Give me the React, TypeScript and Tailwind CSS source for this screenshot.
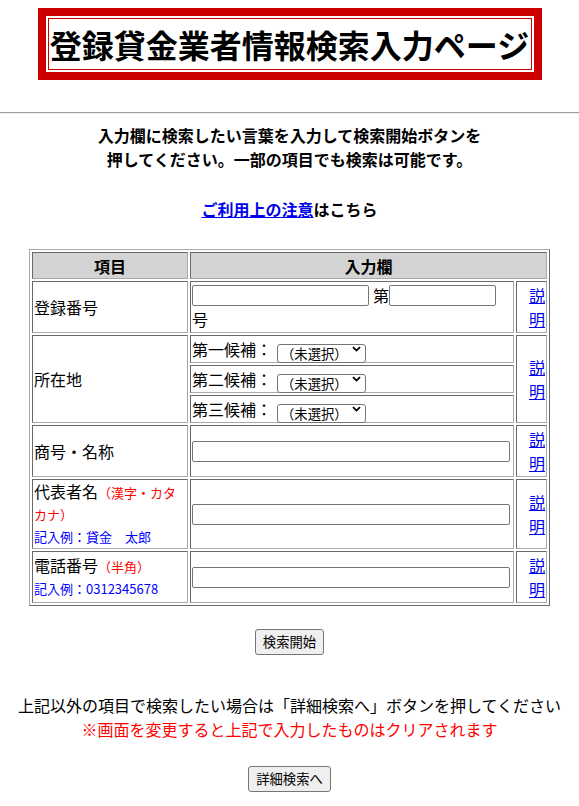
import React from "react";

// inset / outset borders like an old HTML table with border="1"
const tableBorder =
  "border border-t-[#a9a9a9] border-l-[#a9a9a9] border-r-[#696969] border-b-[#696969]";
const cell =
  "border border-t-[#696969] border-l-[#696969] border-r-[#a9a9a9] border-b-[#a9a9a9] p-px align-middle";

const TextInput = ({ width }: { width: string }) => (
  <input
    type="text"
    className={`${width} h-[21px] rounded-[2px] border border-[#767676] bg-white px-[2px] text-[13.33px] outline-none`}
  />
);

const PrefSelect = () => (
  <div className="relative inline-block h-[19px] w-[89px]">
    <select className="h-full w-full appearance-none rounded-[3px] border border-[#767676] bg-white pl-[3px] text-[13.33px] leading-[15px] text-black outline-none">
      <option>（未選択）</option>
    </select>
    <svg
      className="pointer-events-none absolute right-[5px] top-[6px]"
      width="9"
      height="6"
      viewBox="0 0 9 6"
      fill="none"
    >
      <path d="M1 1.2 L4.5 4.6 L8 1.2" stroke="#000" strokeWidth="1.8" />
    </svg>
  </div>
);

const Help = ({ rows = 1 }: { rows?: number }) => (
  <td rowSpan={rows} className={`${cell} text-right leading-[24px]`}>
    <a href="#" className="text-[#0000ee] underline">
      説明
    </a>
  </td>
);

const Candidate = ({ label }: { label: string }) => (
  <div className="flex items-center">
    <span className="leading-[24px]">{label}</span>
    <span className="ml-[5px] flex items-center">
      <PrefSelect />
    </span>
  </div>
);

const OldButton = ({ children }: { children: React.ReactNode }) => (
  <button className="h-[26px] rounded-[3px] border border-[#767676] bg-[#efefef] px-[7px] text-[13.33px] leading-[20px] text-black">
    {children}
  </button>
);

export default function App() {
  return (
    <div className="min-h-screen bg-white pb-4 font-['Noto_Sans_CJK_JP','Noto_Sans',sans-serif] text-[16px] text-black">
      {/* title */}
      <div className="mx-auto mt-[8px] w-[504px] border-[8px] border-[#cc0000] bg-white p-[2px]">
        <div className="flex h-[52px] items-center justify-center border border-[#cc0000]">
          <h1 className="whitespace-nowrap text-[32px] font-bold leading-none">
            登録貸金業者情報検索入力ページ
          </h1>
        </div>
      </div>

      <div className="mt-[32px] h-[2px] border-t border-b border-t-[#a0a0a0] border-b-[#eeeeee]" />

      <p className="mt-[9px] text-center font-bold leading-[24px]">
        入力欄に検索したい言葉を入力して検索開始ボタンを
        <br />
        押してください。一部の項目でも検索は可能です。
      </p>

      <p className="mt-[26px] text-center font-bold leading-[24px]">
        <a href="#" className="text-[#0000ee] underline">
          ご利用上の注意
        </a>
        はこちら
      </p>

      <table
        className={`mx-auto mt-[28px] w-[521px] table-fixed border-separate border-spacing-[2px] ${tableBorder}`}
      >
        <colgroup>
          <col className="w-[156px]" />
          <col className="w-[324px]" />
          <col className="w-[31px]" />
        </colgroup>
        <tbody>
          <tr className="h-[27px]">
            <th className={`${cell} bg-[#d3d3d3] text-center font-bold leading-[22px]`}>項目</th>
            <th colSpan={2} className={`${cell} bg-[#d3d3d3] text-center font-bold leading-[22px]`}>
              入力欄
            </th>
          </tr>

          <tr className="h-[52px]">
            <td className={cell}>登録番号</td>
            <td className={cell}>
              <div className="flex h-[24px] items-center">
                <TextInput width="w-[177px]" />
                <span className="ml-[4px] leading-[24px]">第</span>
                <TextInput width="w-[107px]" />
              </div>
              <div className="leading-[24px]">号</div>
            </td>
            <Help />
          </tr>

          <tr className="h-[27px]">
            <td rowSpan={3} className={cell}>
              所在地
            </td>
            <td className={cell}>
              <Candidate label="第一候補：" />
            </td>
            <Help rows={3} />
          </tr>
          <tr className="h-[28px]">
            <td className={cell}>
              <Candidate label="第二候補：" />
            </td>
          </tr>
          <tr className="h-[28px]">
            <td className={cell}>
              <Candidate label="第三候補：" />
            </td>
          </tr>

          <tr className="h-[52px]">
            <td className={cell}>商号・名称</td>
            <td className={cell}>
              <div className="flex items-center">
                <TextInput width="w-[318px]" />
              </div>
            </td>
            <Help />
          </tr>

          <tr className="h-[68px]">
            <td className={`${cell} leading-[21px]`}>
              代表者名
              <span className="text-[13px] text-[#ff0000]">（漢字・カタ</span>
              <br />
              <span className="text-[13px] text-[#ff0000]">カナ）</span>
              <br />
              <span className="text-[13px] text-[#0000ff]">記入例：貸金　太郎</span>
            </td>
            <td className={cell}>
              <div className="flex items-center">
                <TextInput width="w-[318px]" />
              </div>
            </td>
            <Help />
          </tr>

          <tr className="h-[52px]">
            <td className={`${cell} leading-[21px]`}>
              電話番号
              <span className="text-[13px] text-[#ff0000]">（半角）</span>
              <br />
              <span className="text-[13px] text-[#0000ff]">記入例：0312345678</span>
            </td>
            <td className={cell}>
              <div className="flex items-center">
                <TextInput width="w-[318px]" />
              </div>
            </td>
            <Help />
          </tr>
        </tbody>
      </table>

      <div className="mt-[23px] flex justify-center">
        <OldButton>検索開始</OldButton>
      </div>

      <p className="mt-[38px] text-center leading-[24px]">
        上記以外の項目で検索したい場合は「詳細検索へ」ボタンを押してください
        <br />
        <span className="text-[#ff0000]">※画面を変更すると上記で入力したものはクリアされます</span>
      </p>

      <div className="mt-[25px] flex justify-center">
        <OldButton>詳細検索へ</OldButton>
      </div>
    </div>
  );
}
